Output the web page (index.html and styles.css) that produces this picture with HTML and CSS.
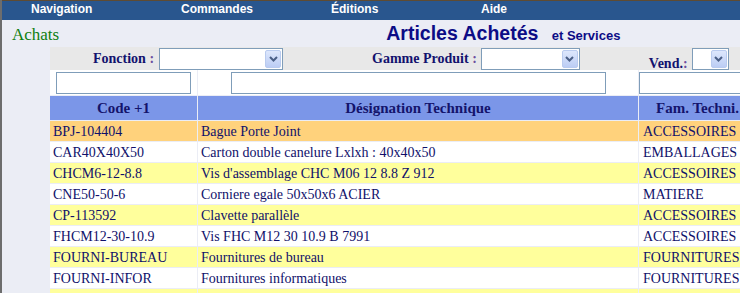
FILE: index.html
```html
<!DOCTYPE html>
<html lang="fr">
<head>
<meta charset="utf-8">
<title>Articles Achetés</title>
<link rel="stylesheet" href="styles.css">
</head>
<body>
<div class="frame">
  <nav class="nav">
    <span class="nav-item">Navigation</span>
    <span class="nav-item">Commandes</span>
    <span class="nav-item">Éditions</span>
    <span class="nav-item">Aide</span>
  </nav>
  <div class="titlebar">
    <span class="section">Achats</span>
    <h1 class="title">Articles Achetés <small class="subtitle">et Services</small></h1>
  </div>
  <div class="filters">
    <div class="fgroup g-fonction">
      <span class="flabel">Fonction <span class="colon">:</span></span>
      <span class="select w-fonction"><span class="sbtn"><svg width="9" height="6" viewBox="0 0 9 6"><polyline points="1,1 4.5,4.5 8,1" fill="none" stroke="#4a5f86" stroke-width="2"/></svg></span></span>
    </div>
    <div class="fgroup g-gamme">
      <span class="flabel">Gamme Produit <span class="colon">:</span></span>
      <span class="select w-gamme"><span class="sbtn"><svg width="9" height="6" viewBox="0 0 9 6"><polyline points="1,1 4.5,4.5 8,1" fill="none" stroke="#4a5f86" stroke-width="2"/></svg></span></span>
    </div>
    <div class="fgroup g-vend">
      <span class="flabel low">Vend.<span class="colon">:</span></span>
      <span class="select w-vend"><span class="sbtn"><svg width="9" height="6" viewBox="0 0 9 6"><polyline points="1,1 4.5,4.5 8,1" fill="none" stroke="#4a5f86" stroke-width="2"/></svg></span></span>
    </div>
  </div>
  <table class="grid">
    <colgroup><col class="c1"><col class="c2"><col class="c3"></colgroup>
    <tr class="search">
      <td><input class="in in1" type="text"></td>
      <td><input class="in in2" type="text"></td>
      <td class="left"><input class="in in3" type="text"></td>
    </tr>
    <tr class="head">
      <th>Code +1</th>
      <th>Désignation Technique</th>
      <th class="fam">Fam. Techni.</th>
    </tr>
    <tr class="sel"><td>BPJ-104404</td><td>Bague Porte Joint</td><td class="c3t">ACCESSOIRES</td></tr>
    <tr class="even"><td>CAR40X40X50</td><td>Carton double canelure Lxlxh : 40x40x50</td><td class="c3t">EMBALLAGES</td></tr>
    <tr class="odd"><td>CHCM6-12-8.8</td><td>Vis d'assemblage CHC M06 12 8.8 Z 912</td><td class="c3t">ACCESSOIRES</td></tr>
    <tr class="even"><td>CNE50-50-6</td><td>Corniere egale 50x50x6 ACIER</td><td class="c3t">MATIERE</td></tr>
    <tr class="odd"><td>CP-113592</td><td>Clavette parallèle</td><td class="c3t">ACCESSOIRES</td></tr>
    <tr class="even"><td>FHCM12-30-10.9</td><td>Vis FHC M12 30 10.9 B 7991</td><td class="c3t">ACCESSOIRES</td></tr>
    <tr class="odd"><td>FOURNI-BUREAU</td><td>Fournitures de bureau</td><td class="c3t">FOURNITURES</td></tr>
    <tr class="even"><td>FOURNI-INFOR</td><td>Fournitures informatiques</td><td class="c3t">FOURNITURES</td></tr>
    <tr class="odd"><td></td><td></td><td class="c3t"></td></tr>
  </table>
</div>
</body>
</html>
```
FILE: styles.css
```css
html, body {
  margin: 0;
  padding: 0;
  overflow: hidden;
  background: #ebedf5;
}
.frame {
  border-left: 2px solid #6d6d6d;
  height: 293px;
  box-sizing: border-box;
  width: 740px;
  overflow: hidden;
}
.nav {
  display: flex;
  height: 19px;
  background: #29568e;
  border-top: 1px solid #5e4b33;
}
.nav-item {
  width: 150px;
  flex: none;
  box-sizing: border-box;
  padding-left: 29px;
  font: bold 12px "Liberation Sans", Arial, sans-serif;
  line-height: 16px;
  color: #ffffff;
}
.titlebar {
  display: flex;
  align-items: baseline;
  height: 27px;
  padding-left: 10px;
}
.section {
  font: 17px "Liberation Serif", "Times New Roman", serif;
  color: #0f7f10;
  line-height: 27px;
}
.title {
  margin: 0 0 0 327px;
  font: bold 19.5px "Liberation Sans", Arial, sans-serif;
  color: #0c0c86;
  line-height: 27px;
  white-space: nowrap;
}
.subtitle {
  font-size: 13px;
  margin-left: 8px;
}
.filters {
  display: flex;
  align-items: center;
  height: 23px;
  margin-left: 48px;
  background: #e8e8e8;
  font: bold 14px "Liberation Serif", "Times New Roman", serif;
  color: #12126e;
}
.fgroup {
  display: flex;
  align-items: center;
  flex: none;
}
.g-fonction { margin-left: 43px; }
.g-gamme { margin-left: 89px; }
.g-vend { margin-left: 69px; }
.flabel {
  white-space: nowrap;
  margin-right: 5px;
  line-height: 16px;
}
.g-gamme .flabel { margin-right: 4px; }
.flabel.low { position: relative; top: 5px; margin-right: 4px; }
.colon { color: #6b4e9e; }
.select {
  display: flex;
  justify-content: flex-end;
  align-items: center;
  box-sizing: border-box;
  height: 22px;
  background: #ffffff;
  border: 1px solid #7f9db9;
  padding-right: 1px;
}
.w-fonction { width: 124px; }
.w-gamme { width: 99px; }
.w-vend { width: 37px; }
.sbtn {
  display: flex;
  align-items: center;
  justify-content: center;
  box-sizing: border-box;
  width: 16px;
  height: 18px;
  border: 1px solid #b9cbef;
  border-radius: 2px;
  background: linear-gradient(#dde7fc, #bccdf4);
}
.grid {
  border-collapse: separate;
  border-spacing: 1px;
  margin: -1px 0 0 47px;
  table-layout: fixed;
  width: 695px;
  font: 14px "Liberation Serif", "Times New Roman", serif;
  color: #10106a;
}
.c1 { width: 147px; }
.c2 { width: 440px; }
.c3 { width: 104px; }
.grid td, .grid th {
  padding: 0 0 0 3px;
  white-space: nowrap;
  overflow: hidden;
}
.grid tr td { height: 19px; padding-top: 1px; line-height: 17px; }
.grid .search td {
  background: #ffffff;
  height: 25px;
  padding: 0;
  text-align: center;
}
.grid .search td.left { text-align: left; }
.in {
  box-sizing: border-box;
  height: 22px;
  border: 1px solid #7f9db9;
  margin: 0;
  padding: 0;
  vertical-align: middle;
  background: #ffffff;
}
.in1 { width: 135px; }
.in2 { width: 375px; }
.in3 { width: 120px; }
.grid .head th {
  background: #7b96e8;
  height: 24px;
  padding: 0;
  text-align: center;
  font-size: 15px;
  font-weight: bold;
  color: #14146c;
}
.grid .head th.fam { text-align: left; padding-left: 17px; }
.grid td.c3t { padding-left: 4px; }
.sel td { background: #ffd27c; }
.even td { background: #ffffff; }
.odd td { background: #ffff9c; }
```
